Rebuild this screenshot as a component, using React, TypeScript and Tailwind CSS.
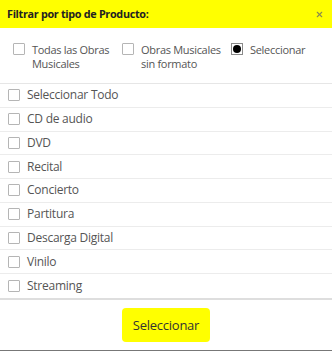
import { X } from "lucide-react";

const productos = [
  "Seleccionar Todo",
  "CD de audio",
  "DVD",
  "Recital",
  "Concierto",
  "Partitura",
  "Descarga Digital",
  "Vinilo",
  "Streaming",
];

function Box() {
  return <span className="block w-[12px] h-[12px] shrink-0 border border-[#b5b5b5] bg-white rounded-[1px]" />;
}

export default function App() {
  return (
    <div className="w-[332px] h-[351px] bg-white flex flex-col font-['Open_Sans',sans-serif] text-[#555] tracking-[-0.25px]">
      {/* cabecera */}
      <div className="h-[28px] bg-[#ffff00] flex items-center justify-between pl-[7px] pr-[8px]">
        <span className="text-[10.8px] font-bold text-[#222] tracking-[-0.3px]">Filtrar por tipo de Producto:</span>
        <X size={9} strokeWidth={3} className="text-[#8a8a50]" />
      </div>

      {/* tipo de obra */}
      <div className="flex h-[55px] pt-[15px] text-[11px] leading-[14px] whitespace-nowrap tracking-[-0.3px]">
        <div className="flex gap-[7px] pl-[13px] w-[122px]">
          <Box />
          <span>Todas las Obras<br />Musicales</span>
        </div>
        <div className="flex gap-[7px] w-[109px]">
          <Box />
          <span>Obras Musicales<br />sin formato</span>
        </div>
        <div className="flex gap-[7px]">
          <span className="w-[12px] h-[12px] border border-[#8a8a8a] bg-white flex items-center justify-center">
            <span className="w-[8px] h-[8px] rounded-full bg-black" />
          </span>
          <span>Seleccionar</span>
        </div>
      </div>

      {/* lista */}
      <div className="border-t border-[#e6e6e6] border-b-2 border-b-[#dedede]">
        {productos.map((p, i) => (
          <div
            key={p}
            className={`h-[23.75px] flex items-center gap-[7px] pl-[8px] text-[12px] ${i < productos.length - 1 ? "border-b border-[#ececec]" : ""}`}
          >
            <Box />
            <span>{p}</span>
          </div>
        ))}
      </div>

      {/* pie */}
      <div className="flex-1 flex items-center justify-center border-b border-[#777]">
        <button className="w-[88px] h-[34px] rounded-[4px] bg-[#ffff00] text-[13px] text-[#333] mt-[1px]">
          Seleccionar
        </button>
      </div>
    </div>
  );
}
